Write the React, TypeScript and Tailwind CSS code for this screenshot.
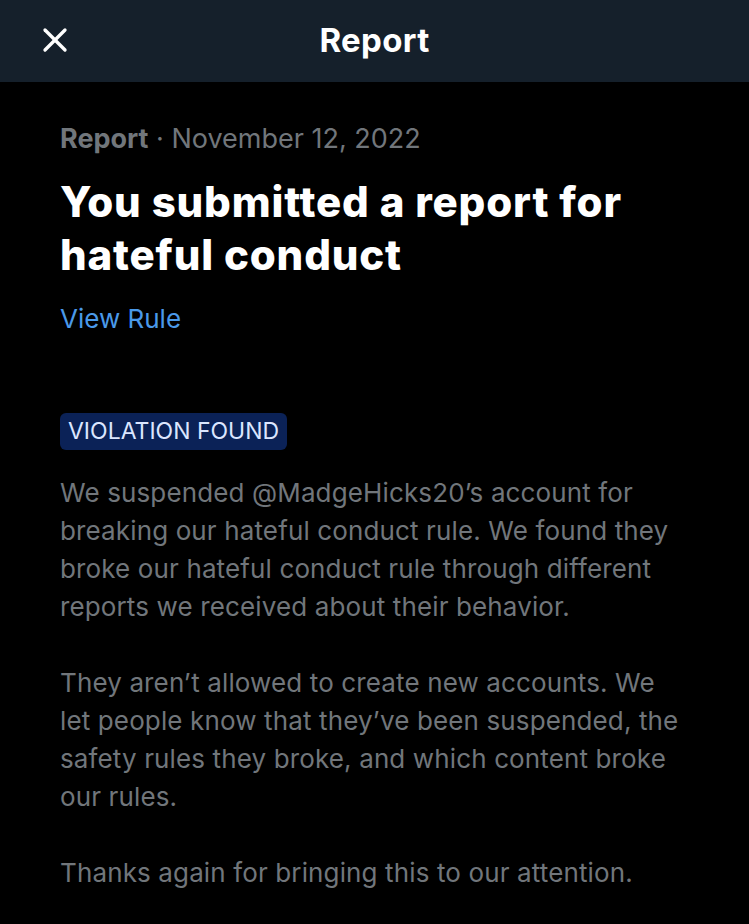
import { X } from 'lucide-react'

// Paragraph lines are broken where the reference breaks them
const BODY: string[][] = [
  [
    'We suspended @MadgeHicks20’s account for',
    'breaking our hateful conduct rule. We found they',
    'broke our hateful conduct rule through different',
    'reports we received about their behavior.',
  ],
  [
    'They aren’t allowed to create new accounts. We',
    'let people know that they’ve been suspended, the',
    'safety rules they broke, and which content broke',
    'our rules.',
  ],
  ['Thanks again for bringing this to our attention.'],
]

export default function App() {
  return (
    <div className="w-[749px] h-[924px] bg-black font-['Inter',sans-serif] overflow-hidden">
      {/* ── Header ─────────────────────────────── */}
      <header className="h-[82px] bg-[#15202b] flex items-center relative">
        <X size={40} strokeWidth={2} className="text-white absolute left-[35px] top-[20px]" />
        <h1 className="w-full text-center text-white text-[33px] font-bold tracking-[0.01em]">Report</h1>
      </header>

      {/* ── Report body ────────────────────────── */}
      <main className="pl-[60px] pr-[40px] pt-[39px]">
        <p className="text-[27px] text-[#71767b] leading-[36px]">
          <span className="font-bold">Report</span> · November 12, 2022
        </p>

        <h2 className="mt-[18px] text-white text-[42px] font-extrabold leading-[53px] tracking-[0.02em]">
          You submitted a report for
          <br />
          hateful conduct
        </h2>

        <a className="block mt-[21px] text-[26px] text-[#4a99e9] leading-[34px]">View Rule</a>

        <span className="inline-block mt-[77px] px-[8px] h-[37px] leading-[37px] rounded-[6px] bg-[#0b2257] text-[#dbe6ff] text-[23px]">
          VIOLATION FOUND
        </span>

        <div className="mt-[24px] space-y-[38px]">
          {BODY.map((lines) => (
            <p key={lines[0]} className="text-[26px] leading-[38px] text-[#71767b] tracking-[0.005em]">
              {lines.map((l, i) => (
                <span key={i} className="block whitespace-nowrap">{l}</span>
              ))}
            </p>
          ))}
        </div>
      </main>
    </div>
  )
}
